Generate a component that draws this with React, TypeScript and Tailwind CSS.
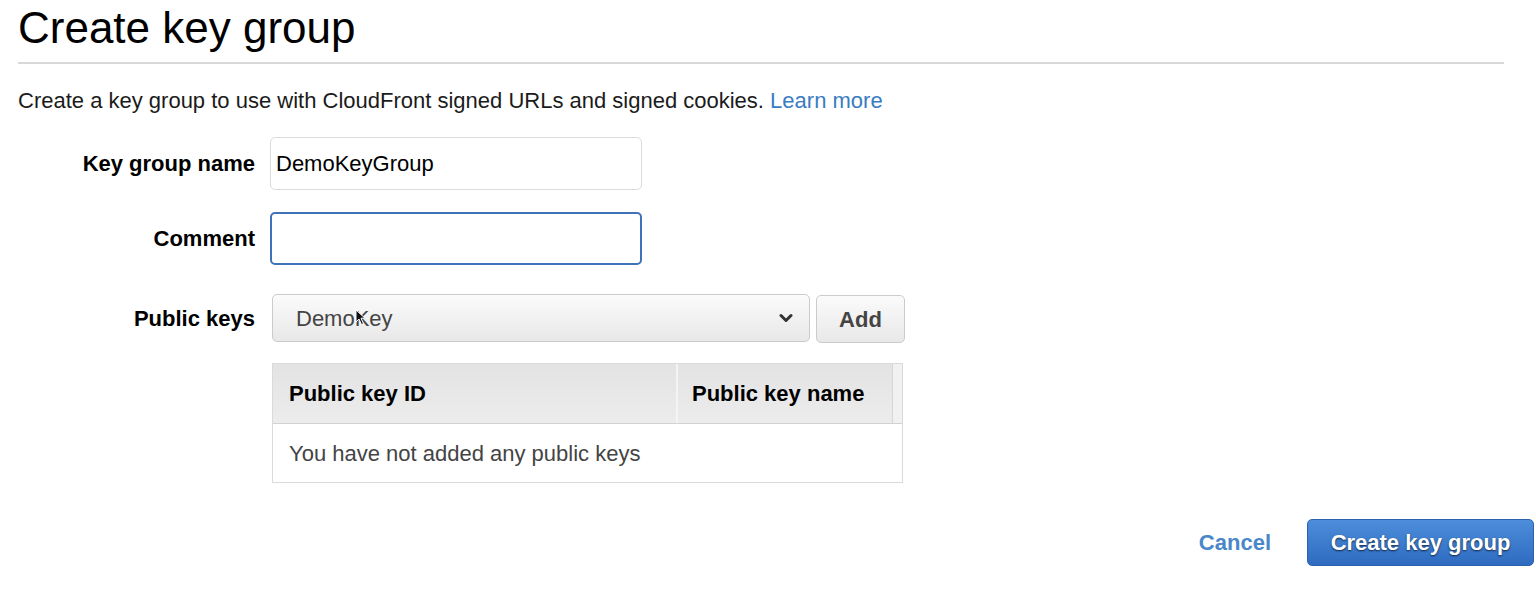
import React from "react";

const font = { fontFamily: '"Liberation Sans", Arial, Helvetica, sans-serif' };

function Chevron() {
  return (
    <svg width="14" height="10" viewBox="0 0 14 10" fill="none">
      <path d="M2 2.5 L7 7.5 L12 2.5" stroke="#333" strokeWidth="3" strokeLinecap="round" strokeLinejoin="round" />
    </svg>
  );
}

function Cursor() {
  return (
    <svg width="11" height="17" viewBox="0 0 11 17" className="absolute left-[82px] top-[14px]">
      <path d="M1 1 L1 13 L4 10 L6.5 15.5 L8.5 14.6 L6 9.2 L10 9.2 Z" fill="#111" stroke="#fff" strokeWidth="1" />
    </svg>
  );
}

export default function App() {
  return (
    <div className="min-h-screen bg-white pl-[18px] pr-[32px] text-black" style={font}>
      {/* Header */}
      <div className="border-b-2 border-[#d8d8d8] pb-[10px] pt-[3px]">
        <h1 className="text-[44px] leading-[49px] font-normal">Create key group</h1>
      </div>

      <p className="mt-[24px] text-[22px] leading-[26px] text-[#1b1b1b]">
        Create a key group to use with CloudFront signed URLs and signed cookies.{" "}
        <a className="text-[#3a7cc2]">Learn more</a>
      </p>

      {/* Form */}
      <div className="mt-[23px] grid grid-cols-[237px_auto] gap-x-[15px] items-center">
        <label className="text-right text-[22px] font-bold">Key group name</label>
        <div className="flex h-[53px] w-[372px] items-center rounded-[5px] border border-[#dcdcdc] px-[5px] text-[22px]">
          DemoKeyGroup
        </div>

        <label className="mt-[22px] text-right text-[22px] font-bold">Comment</label>
        <div className="mt-[22px] h-[53px] w-[372px] rounded-[5px] border-2 border-[#3f72b7]" />

        <label className="mt-[28px] pl-[3px] text-right text-[22px] font-bold">Public keys</label>
        <div className="mt-[28px] flex items-center gap-[6px] pl-[2px]">
          <div className="relative flex h-[48px] w-[538px] items-center justify-between rounded-[5px] border border-[#cbcbcb] bg-gradient-to-b from-[#fbfbfb] to-[#e8e8e8] pl-[23px] pr-[16px] text-[22px] text-[#444]">
            <span>DemoKey</span>
            <Chevron />
            <Cursor />
          </div>
          <button className="mt-[2px] h-[48px] w-[89px] rounded-[5px] border border-[#cbcbcb] bg-gradient-to-b from-[#fbfbfb] to-[#e8e8e8] text-[22px] font-bold text-[#444]">
            Add
          </button>
        </div>

        <div />
        <div className="mt-[20px] ml-[2px] w-[631px] border border-[#dadada]">
          <div className="flex h-[60px] border-b border-[#d2d2d2] bg-gradient-to-b from-[#e3e3e3] to-[#ececec]">
            <div className="flex w-[405px] items-center border-r-2 border-[#f4f4f4] pl-[16px] text-[22px] font-bold">
              Public key ID
            </div>
            <div className="flex w-[214px] items-center pl-[14px] text-[22px] font-bold">Public key name</div>
            <div className="flex-1 border-l border-[#d6d6d6] bg-[#f1f1f1]" />
          </div>
          <div className="flex h-[58px] items-center pl-[16px] text-[22px] text-[#444]">
            You have not added any public keys
          </div>
        </div>
      </div>

      {/* Footer */}
      <div className="-mr-[30px] mt-[36px] flex items-center justify-end gap-[36px]">
        <a className="text-[22px] font-bold text-[#4a87c9]">Cancel</a>
        <button className="h-[47px] w-[227px] rounded-[5px] border border-[#2b62ad] bg-gradient-to-b from-[#4d8edb] to-[#2e6bc0] text-[22px] font-bold text-white [text-shadow:0_1px_2px_rgba(0,0,0,0.7)]">
          Create key group
        </button>
      </div>
    </div>
  );
}
